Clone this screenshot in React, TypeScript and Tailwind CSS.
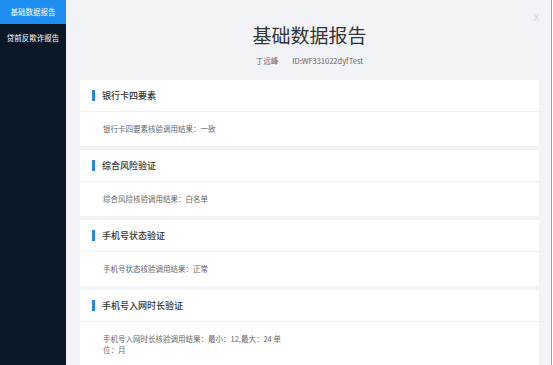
import React from "react";

interface ReportCardProps {
  title: string;
  children: React.ReactNode;
  tall?: boolean;
}

const ReportCard: React.FC<ReportCardProps> = (props) => {
  return (
    <section className="shrink-0 bg-white">
      <div className="flex h-[32px] items-center border-b border-[#efefef] pl-[12px]">
        <span className="mr-[7px] h-[11px] w-[3px] bg-[#2387e6]" />
        <h2 className="text-[9px] font-medium text-[#333]">{props.title}</h2>
      </div>
      {props.tall ? (
        <div className="pb-[12px] pl-[23px] pt-[11px] text-[7.5px] leading-[11px] text-[#666]">
          {props.children}
        </div>
      ) : (
        <div className="flex h-[34px] items-center pl-[23px] text-[7.5px] text-[#666]">
          {props.children}
        </div>
      )}
    </section>
  );
};

export default function App() {
  return (
    <div className="flex h-[365px] w-[553px] overflow-hidden bg-[#f2f3f7] font-['Noto_Sans_CJK_SC',sans-serif]">
      <aside className="w-[66px] shrink-0 bg-[#0b1828] text-[7.5px] text-white">
        <div className="flex h-[24px] items-center justify-center bg-[#1e8ef0]">
          基础数据报告
        </div>
        <div className="flex h-[28px] items-center justify-center">贷前反欺诈报告</div>
      </aside>

      <main className="relative flex-1 pl-[14px] pr-[12px]">
        <button className="absolute right-[12px] top-[11px] text-[9px] text-[#cfd3da]">
          X
        </button>
        <h1 className="pt-[22px] text-center text-[19px] leading-[26px] text-[#333]">
          基础数据报告
        </h1>
        <p className="mt-[8px] text-center text-[7.5px] leading-[10px] text-[#666]">
          丁远峰<span className="ml-[14px]">ID:WF331022dyfTest</span>
        </p>

        <div className="mt-[14px] flex flex-col gap-[4px]">
          <ReportCard title="银行卡四要素">银行卡四要素核验调用结果：一致</ReportCard>
          <ReportCard title="综合风险验证">综合风险核验调用结果：白名单</ReportCard>
          <ReportCard title="手机号状态验证">手机号状态核验调用结果：正常</ReportCard>
          <ReportCard title="手机号入网时长验证" tall>
            手机号入网时长核验调用结果：最小：12,最大：24 单
            <br />
            位：月
          </ReportCard>
        </div>
      </main>

      <div className="w-[2px] shrink-0 border-l border-[#9aa0a8] bg-white" />
    </div>
  );
}
